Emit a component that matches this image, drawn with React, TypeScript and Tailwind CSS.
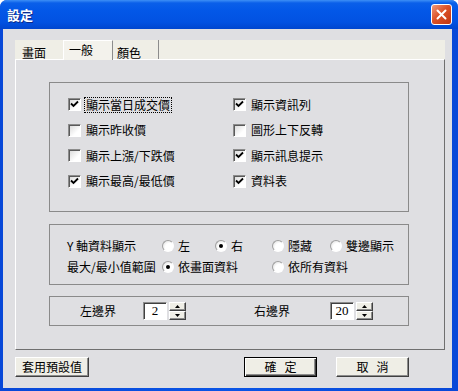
import React from 'react';

const raised =
  'border border-t-white border-l-white border-b-[#404040] border-r-[#404040] shadow-[inset_-1px_-1px_0_#8c8c8c]';

function CheckBox({ checked }: { checked: boolean }) {
  return (
    <span className="flex h-[13px] w-[13px] shrink-0 items-center justify-center border border-t-[#8c8c8c] border-l-[#8c8c8c] border-b-white border-r-white bg-[linear-gradient(135deg,#d8d8d8,#ffffff_70%)] shadow-[inset_1px_1px_0_#5a5a5a]">
      {checked && (
        <svg width="9" height="9" viewBox="0 0 9 9" aria-hidden="true">
          <path d="M1 3.5 L3.5 6 L8 1.5" stroke="#000" strokeWidth="1.8" fill="none" />
        </svg>
      )}
    </span>
  );
}

function Radio({ checked }: { checked?: boolean }) {
  return (
    <span className="flex h-[12px] w-[12px] shrink-0 items-center justify-center rounded-full border border-t-[#a0a0a0] border-l-[#a0a0a0] border-b-white border-r-white bg-[radial-gradient(circle_at_65%_65%,#ffffff_45%,#d6d6d6)]">
      {checked && <span className="h-[4px] w-[4px] rounded-full bg-black" />}
    </span>
  );
}

function CheckItem({ label, checked, focus }: { label: string; checked: boolean; focus?: boolean }) {
  return (
    <div className="flex h-[25.5px] items-center gap-[5px]">
      <CheckBox checked={checked} />
      {focus ? (
        <span className="-ml-[2px] border border-dotted border-black px-[1px] leading-[14px]">{label}</span>
      ) : (
        <span>{label}</span>
      )}
    </div>
  );
}

function RadioItem({ label, checked }: { label: string; checked?: boolean }) {
  return (
    <div className="flex items-center gap-[4px] whitespace-nowrap">
      <Radio checked={checked} />
      <span>{label}</span>
    </div>
  );
}

function Spinner() {
  return (
    <div className="ml-[2px] flex h-[18px] w-[17px] flex-col">
      <div className={`flex h-[9px] items-center justify-center bg-[#efeee6] ${raised}`}>
        <svg width="5" height="3" viewBox="0 0 5 3" aria-hidden="true">
          <path d="M2.5 0 L5 3 L0 3 Z" fill="#000" />
        </svg>
      </div>
      <div className={`flex h-[9px] items-center justify-center bg-[#efeee6] ${raised}`}>
        <svg width="5" height="3" viewBox="0 0 5 3" aria-hidden="true">
          <path d="M0 0 L5 0 L2.5 3 Z" fill="#000" />
        </svg>
      </div>
    </div>
  );
}

function NumberBox({ value }: { value: string }) {
  return (
    <div className="flex h-[18px] w-[24px] items-center justify-center border border-t-[#8c8c8c] border-l-[#8c8c8c] border-b-white border-r-white bg-white font-['Liberation_Serif',serif] text-[13px] shadow-[inset_1px_1px_0_#404040]">
      {value}
    </div>
  );
}

export default function App() {
  return (
    <div className="flex h-[391px] w-[458px] flex-col overflow-hidden rounded-t-[7px] bg-[linear-gradient(90deg,#0848d8,#0a55e6_50%,#0848d8)] font-['Noto_Sans_CJK_TC','Liberation_Sans',sans-serif] text-[12px] text-black">
      {/* 標題列 */}
      <div className="flex h-[29px] shrink-0 items-center justify-between bg-[linear-gradient(180deg,#3d8ff6_0px,#0a5fe9_3px,#0358e8_10px,#0252e2_22px,#0046cf_29px)] pl-[7px] pr-[6px]">
        <span className="text-[13px] font-bold text-white [text-shadow:1px_1px_0_#0b2a8a]">設定</span>
        <span className="flex h-[21px] w-[21px] items-center justify-center rounded-[3px] border border-white bg-[linear-gradient(135deg,#f09a7c,#dc5228_45%,#c23511)]">
          <svg width="11" height="11" viewBox="0 0 11 11" aria-hidden="true">
            <path d="M1.5 1.5 L9.5 9.5 M9.5 1.5 L1.5 9.5" stroke="#fff" strokeWidth="2" strokeLinecap="round" />
          </svg>
        </span>
      </div>

      {/* 內容 */}
      <div className="mb-[3px] ml-[3px] mr-[6px] flex-1 bg-[#dfdfe2] pl-[12px] pt-[11px]">
        {/* 分頁 */}
        <div className="flex h-[19px] w-[430px] items-end bg-[#efeee6]">
          <div className="h-[19px] w-[48px] pl-[7px] pt-[4px]">畫面</div>
          <div className="relative z-10 -mb-[1px] h-[20px] w-[50px] border-l border-r border-t border-l-white border-t-white border-r-[#8c8c8c] bg-[#f3f2ec] pl-[5px]">
            一般
          </div>
          <div className="h-[19px] w-[46px] border-r border-r-[#8c8c8c] pl-[4px] pt-[4px]">顏色</div>
        </div>

        {/* 面板 */}
        <div className="h-[291px] w-[430px] border border-l-white border-t-white border-r-[#6f6f6f] border-b-[#6f6f6f] pl-[33px] pt-[22px]">
          <div className="h-[130px] w-[360px] border border-[#8a8a8a] pl-[18px] pt-[9px]">
            <div className="grid grid-cols-[165px_1fr]">
              <CheckItem label="顯示當日成交價" checked focus />
              <CheckItem label="顯示資訊列" checked />
              <CheckItem label="顯示昨收價" checked={false} />
              <CheckItem label="圖形上下反轉" checked={false} />
              <CheckItem label="顯示上漲/下跌價" checked={false} />
              <CheckItem label="顯示訊息提示" checked />
              <CheckItem label="顯示最高/最低價" checked />
              <CheckItem label="資料表" checked />
            </div>
          </div>

          <div className="mt-[12px] h-[61px] w-[360px] border border-[#8a8a8a] pl-[17px] pt-[10px]">
            <div className="grid grid-cols-[95px_53px_57px_58px_auto] grid-rows-[21px_21px] items-center">
              <span className="whitespace-nowrap">Y 軸資料顯示</span>
              <RadioItem label="左" />
              <RadioItem label="右" checked />
              <RadioItem label="隱藏" />
              <RadioItem label="雙邊顯示" />
              <span className="whitespace-nowrap">最大/最小值範圍</span>
              <div className="col-span-2">
                <RadioItem label="依畫面資料" checked />
              </div>
              <div className="col-span-2">
                <RadioItem label="依所有資料" />
              </div>
            </div>
          </div>

          <div className="mt-[11px] flex h-[30px] w-[360px] items-center border border-[#8a8a8a] pl-[30px]">
            <span className="w-[36px]">左邊界</span>
            <div className="ml-[27px] flex items-center">
              <NumberBox value="2" />
              <Spinner />
            </div>
            <span className="ml-[68px] w-[36px]">右邊界</span>
            <div className="ml-[40px] flex items-center">
              <NumberBox value="20" />
              <Spinner />
            </div>
          </div>
        </div>

        {/* 按鈕 */}
        <div className="mt-[7px] flex h-[20px]">
          <button className={`h-[20px] w-[74px] bg-[#efeee6] leading-none ${raised}`}>套用預設值</button>
          <button className="ml-[155px] h-[20px] w-[73px] border border-black bg-[#efeee6] leading-none shadow-[inset_1px_1px_0_#fff,inset_-1px_-1px_0_#404040,inset_-2px_-2px_0_#8c8c8c]">
            確&nbsp;&nbsp;&nbsp;定
          </button>
          <button className={`ml-[19px] h-[20px] w-[73px] bg-[#efeee6] leading-none ${raised}`}>取&nbsp;&nbsp;&nbsp;消</button>
        </div>
      </div>
    </div>
  );
}
